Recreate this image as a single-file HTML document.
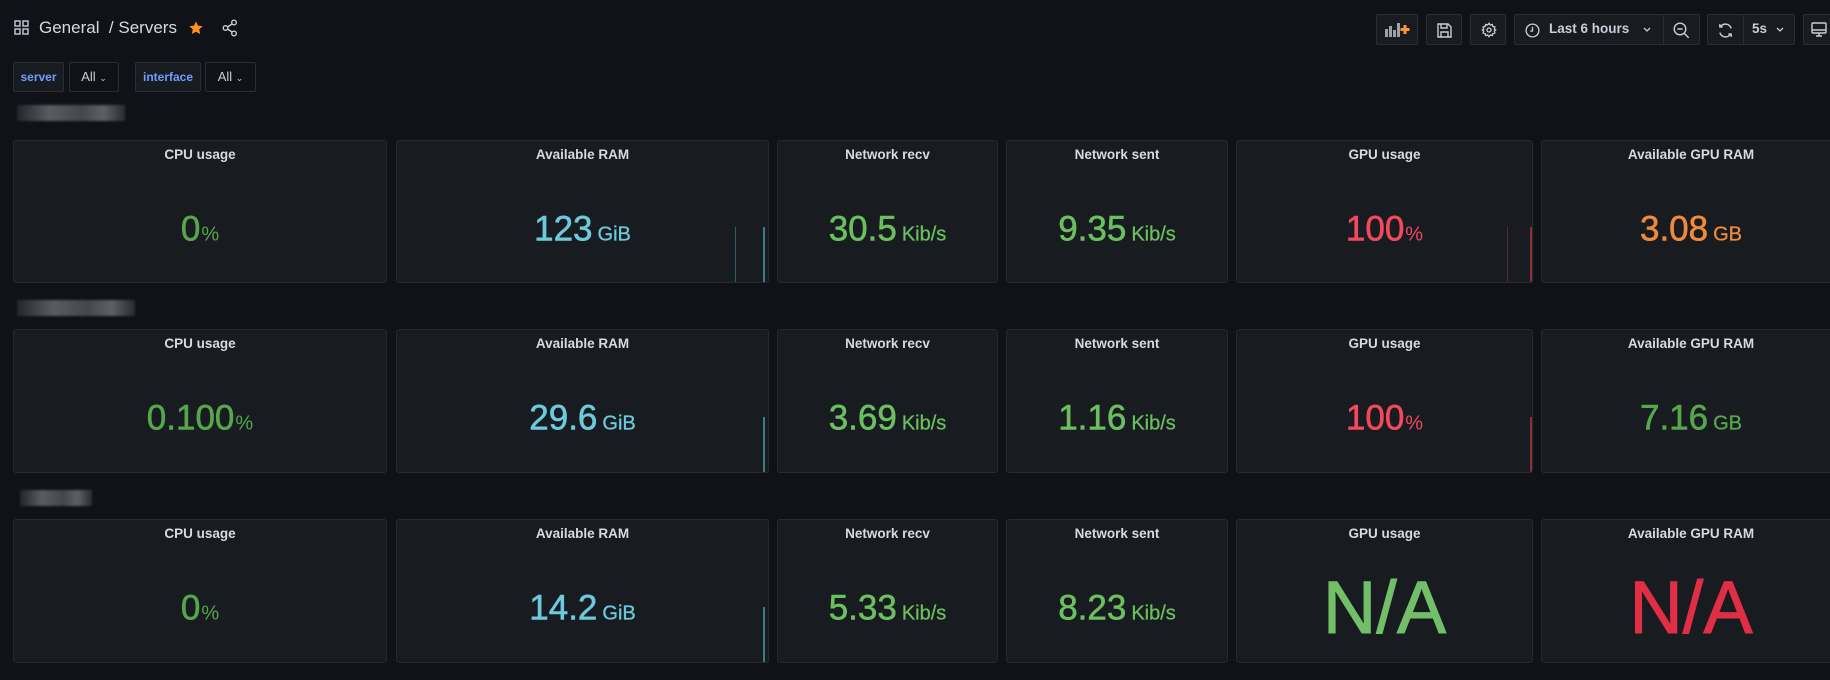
<!DOCTYPE html>
<html><head><meta charset="utf-8"><style>
*{box-sizing:border-box;margin:0;padding:0}
body{width:1830px;height:680px;background:#111217;font-family:"Liberation Sans",sans-serif;color:#ccccdc;position:relative;overflow:hidden}
.abs{position:absolute}
.btn{position:absolute;top:14px;height:31px;background:#181b1f;border:1px solid #2a2d33;border-radius:2px}
.p{position:absolute;background:#181b1f;border:1px solid #26292f;border-radius:3px;overflow:hidden}
.p .t{position:absolute;top:6px;left:0;right:0;text-align:center;font-size:13.5px;font-weight:bold;color:#d8d9e2}
.p .v{position:absolute;left:0;right:0;top:88px;transform:translateY(-50%);text-align:center;white-space:nowrap;line-height:1}
.v b{font-weight:normal;font-size:35px;-webkit-text-stroke:0.6px currentColor}
.v i{font-style:normal;font-size:20px;margin-left:5px;-webkit-text-stroke:0.3px currentColor}
.v .pc{font-size:20px;margin-left:1px}
.g{color:#56a64b}.g2{color:#6abf5e}.c{color:#6ccadc}.r{color:#f2495c}.o{color:#f08a3a}
.blur{position:absolute;height:16px;background:linear-gradient(90deg,#24262c,#5a5b63 30%,#45464d 60%,#5f5f68 80%,#2a2b31);filter:blur(1px)}
.spk{position:absolute;bottom:0;width:2px}
.var{position:absolute;top:62px;height:30px;border:1px solid #2a2d33;border-radius:2px;font-size:13px;line-height:28px;text-align:center}
</style></head><body>
<svg class="abs" style="left:14px;top:20px" width="15" height="15" viewBox="0 0 15 15" fill="none" stroke="#ccccdc" stroke-width="1.4"><rect x="1" y="1" width="5" height="5"/><rect x="9" y="1" width="5" height="5"/><rect x="1" y="9" width="5" height="5"/><rect x="9" y="9" width="5" height="5"/></svg>
<div class="abs" style="left:39px;top:18px;font-size:17px;color:#d8d9e2">General&nbsp; / Servers</div>
<svg class="abs" style="left:188px;top:20px" width="16" height="16" viewBox="0 0 24 24"><path d="M12 2l3 6.5 7 .8-5.2 4.8 1.5 7L12 17.6 5.7 21l1.5-7L2 9.3l7-.8z" fill="#ff8f1f"/></svg>
<svg class="abs" style="left:222px;top:19px" width="16" height="18" viewBox="0 0 16 18" fill="none" stroke="#ccccdc" stroke-width="1.4"><circle cx="12" cy="3.5" r="2.3"/><circle cx="3.5" cy="9" r="2.3"/><circle cx="12" cy="14.5" r="2.3"/><path d="M5.5 8l4.5-3M5.5 10l4.5 3"/></svg>
<div class="btn" style="left:1376px;width:42px"><svg style="position:absolute;left:8px;top:7px" width="26" height="16" viewBox="0 0 26 16"><g fill="#9fa1a8"><rect x="0" y="7" width="3" height="8"/><rect x="4" y="4" width="3" height="11"/><rect x="8" y="8" width="3" height="7"/><rect x="12" y="1" width="3" height="14"/></g><path d="M20 3v9M15.5 7.5h9" stroke="#ff9830" stroke-width="3"/></svg></div>
<div class="btn" style="left:1426px;width:36px"><svg style="position:absolute;left:10px;top:8px" width="15" height="15" viewBox="0 0 15 15" fill="none" stroke="#ccccdc" stroke-width="1.4"><path d="M1 1h10l3 3v10H1z"/><path d="M4 1v4h6V1M4 14v-5h7v5"/></svg></div>
<div class="btn" style="left:1470px;width:36px"><svg style="position:absolute;left:10px;top:7px" width="16" height="16" viewBox="0 0 24 24" fill="none" stroke="#ccccdc" stroke-width="2"><circle cx="12" cy="12" r="3"/><path d="M12 2l2 2.5 3-.8.8 3 3 .8-.8 3L22 12l-2 1.5.8 3-3 .8-.8 3-3-.8L12 22l-2-2.5-3 .8-.8-3-3-.8.8-3L2 12l2-1.5-.8-3 3-.8.8-3 3 .8z"/></svg></div>
<div class="btn" style="left:1514px;width:186px"><svg style="position:absolute;left:10px;top:8px" width="15" height="15" viewBox="0 0 16 16" fill="none" stroke="#ccccdc" stroke-width="1.4"><circle cx="8" cy="8" r="6.8"/><path d="M8 4v4.5H5.5"/></svg><span style="position:absolute;left:34px;top:6px;font-size:13.5px;font-weight:bold;color:#ccccdc">Last 6 hours</span><svg style="position:absolute;left:128px;top:12px" width="8" height="6" viewBox="0 0 8 6"><path d="M1 1l3 3 3-3" stroke="#ccccdc" fill="none" stroke-width="1.3"/></svg><div style="position:absolute;left:148px;top:0;bottom:0;width:1px;background:#2a2d33"></div><svg style="position:absolute;left:158px;top:7px" width="17" height="17" viewBox="0 0 17 17" fill="none" stroke="#ccccdc" stroke-width="1.4"><circle cx="7" cy="7" r="5.8"/><path d="M4.3 7h5.4M11.2 11.2l4.5 4.5"/></svg></div>
<div class="btn" style="left:1707px;width:88px"><svg style="position:absolute;left:9px;top:7px" width="17" height="17" viewBox="0 0 24 24" fill="none" stroke="#ccccdc" stroke-width="2"><path d="M20 9a8.5 8.5 0 0 0-15-2.5M4 15a8.5 8.5 0 0 0 15 2.5"/><path d="M4 3v4h4M20 21v-4h-4"/></svg><div style="position:absolute;left:35px;top:0;bottom:0;width:1px;background:#2a2d33"></div><span style="position:absolute;left:44px;top:6px;font-size:13.5px;font-weight:bold">5s</span><svg style="position:absolute;left:68px;top:12px" width="8" height="6" viewBox="0 0 8 6"><path d="M1 1l3 3 3-3" stroke="#ccccdc" fill="none" stroke-width="1.3"/></svg></div>
<div class="btn" style="left:1803px;width:40px"><svg style="position:absolute;left:7px;top:7px" width="16" height="16" viewBox="0 0 16 16" fill="none" stroke="#ccccdc" stroke-width="1.4"><rect x="1" y="1" width="14" height="10" rx="1"/><path d="M1 8h14M5 14h6M8 11v3"/></svg></div>
<div class="var" style="left:13px;width:51px;background:#181b1f;color:#6e9fff;font-weight:bold;font-size:12px">server</div>
<div class="var" style="left:69px;width:50px;background:#111217;color:#ccccdc">All <span style="font-size:9px">&#8964;</span></div>
<div class="var" style="left:135px;width:66px;background:#181b1f;color:#6e9fff;font-weight:bold;font-size:12px">interface</div>
<div class="var" style="left:205px;width:51px;background:#111217;color:#ccccdc">All <span style="font-size:9px">&#8964;</span></div>
<div class="blur" style="left:17px;top:105px;width:108px"></div>
<div class="blur" style="left:17px;top:300px;width:118px"></div>
<div class="blur" style="left:20px;top:490px;width:72px"></div>

<div class="p" style="left:13px;top:140px;width:374px;height:143px"><div class="t">CPU usage</div><div class="v g"><b>0</b><span class="pc">%</span></div></div>
<div class="p" style="left:396px;top:140px;width:373px;height:143px"><div class="t">Available RAM</div><div class="v c"><b>123</b><i>GiB</i></div><div class="spk" style="left:338px;width:1px;height:55px;background:#2f5f66"></div><div class="spk" style="left:366px;height:55px;background:#3b7d87"></div></div>
<div class="p" style="left:777px;top:140px;width:221px;height:143px"><div class="t">Network recv</div><div class="v g2"><b>30.5</b><i>Kib/s</i></div></div>
<div class="p" style="left:1006px;top:140px;width:222px;height:143px"><div class="t">Network sent</div><div class="v g2"><b>9.35</b><i>Kib/s</i></div></div>
<div class="p" style="left:1236px;top:140px;width:297px;height:143px"><div class="t">GPU usage</div><div class="v r"><b>100</b><span class="pc">%</span></div><div class="spk" style="left:270px;width:1px;height:55px;background:#5a2a30"></div><div class="spk" style="left:293px;height:55px;background:#8a2f3a"></div></div>
<div class="p" style="left:1541px;top:140px;width:300px;height:143px"><div class="t">Available GPU RAM</div><div class="v o"><b>3.08</b><i>GB</i></div></div>

<div class="p" style="left:13px;top:329px;width:374px;height:144px"><div class="t">CPU usage</div><div class="v g"><b>0.100</b><span class="pc">%</span></div></div>
<div class="p" style="left:396px;top:329px;width:373px;height:144px"><div class="t">Available RAM</div><div class="v c"><b>29.6</b><i>GiB</i></div><div class="spk" style="left:366px;height:55px;background:#3b7d87"></div></div>
<div class="p" style="left:777px;top:329px;width:221px;height:144px"><div class="t">Network recv</div><div class="v g2"><b>3.69</b><i>Kib/s</i></div></div>
<div class="p" style="left:1006px;top:329px;width:222px;height:144px"><div class="t">Network sent</div><div class="v g2"><b>1.16</b><i>Kib/s</i></div></div>
<div class="p" style="left:1236px;top:329px;width:297px;height:144px"><div class="t">GPU usage</div><div class="v r"><b>100</b><span class="pc">%</span></div><div class="spk" style="left:293px;height:55px;background:#8a2f3a"></div></div>
<div class="p" style="left:1541px;top:329px;width:300px;height:144px"><div class="t">Available GPU RAM</div><div class="v g"><b>7.16</b><i>GB</i></div></div>

<div class="p" style="left:13px;top:519px;width:374px;height:144px"><div class="t">CPU usage</div><div class="v g"><b>0</b><span class="pc">%</span></div></div>
<div class="p" style="left:396px;top:519px;width:373px;height:144px"><div class="t">Available RAM</div><div class="v c"><b>14.2</b><i>GiB</i></div><div class="spk" style="left:366px;height:55px;background:#3b7d87"></div></div>
<div class="p" style="left:777px;top:519px;width:221px;height:144px"><div class="t">Network recv</div><div class="v g2"><b>5.33</b><i>Kib/s</i></div></div>
<div class="p" style="left:1006px;top:519px;width:222px;height:144px"><div class="t">Network sent</div><div class="v g2"><b>8.23</b><i>Kib/s</i></div></div>
<div class="p" style="left:1236px;top:519px;width:297px;height:144px"><div class="t">GPU usage</div><div class="v" style="top:88px;color:#73bf69"><b style="font-size:74px;-webkit-text-stroke:1px currentColor">N/A</b></div></div>
<div class="p" style="left:1541px;top:519px;width:300px;height:144px"><div class="t">Available GPU RAM</div><div class="v" style="top:88px;color:#e02f44"><b style="font-size:74px;-webkit-text-stroke:1px currentColor">N/A</b></div></div>
</body></html>
